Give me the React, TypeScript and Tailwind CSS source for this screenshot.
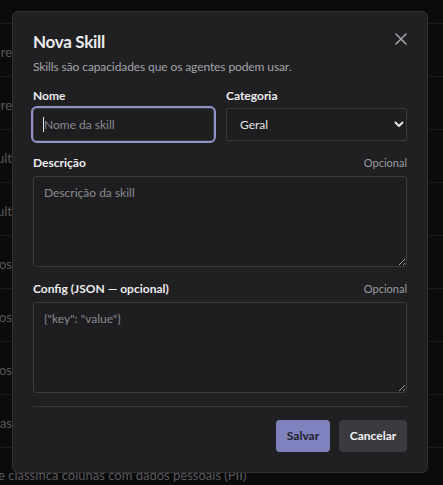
import React from "react";

const rows = [
  "Skill que gere",
  "Skill que gere",
  "Resultado final do result",
  "Resultado final do result",
  "Análise de dados",
  "Análise de dados",
  "Análise de dados",
  "Colunas e tabelas",
];

export default function App() {
  return (
    <div
      className="relative w-[443px] h-[485px] overflow-hidden bg-[#0b0b0c] [color-scheme:dark]"
      style={{ fontFamily: 'Lato, "Open Sans", sans-serif' }}
    >
      {/* background page */}
      <div className="flex flex-col">
        <div className="h-[24px] border-b border-[#1b1b1d]" />
        {rows.map((r, i) => (
          <div key={i} className="h-[53px] border-b border-[#1b1b1d] pt-[19px]">
            <div className="flex w-[12px] justify-end overflow-hidden">
              <span className="shrink-0 whitespace-nowrap text-[13px] leading-[18px] text-[#58585c]">{r}</span>
            </div>
          </div>
        ))}
        <div className="h-[53px] pt-[18px] -ml-[2px]">
          <span className="block whitespace-nowrap text-[13px] leading-[18px] text-[#5a5a5e]">
            e classifica colunas com dados pessoais (PII)
          </span>
        </div>
      </div>

      {/* dialog */}
      <div className="absolute left-[12px] top-[11px] w-[416px] rounded-[6px] border border-[#313134] bg-[#202022] px-5 pt-[18px] pb-5 text-[#ececee]">
        <button className="absolute right-[20px] top-[21px] text-[#a8a8ad]">
          <svg width="12" height="12" viewBox="0 0 12 12" fill="none" stroke="currentColor" strokeWidth="1.5" strokeLinecap="round">
            <path d="M1 1L11 11M11 1L1 11" />
          </svg>
        </button>
        <h2 className="h-[24px] text-[17px] leading-[24px] font-bold tracking-[-0.3px]">Nova Skill</h2>
        <p className="mt-[5px] h-[16px] text-[12px] leading-[16px] tracking-[-0.1px] text-[#a3a3a8]">Skills são capacidades que os agentes podem usar.</p>

        <div className="mt-[13px] grid grid-cols-2 gap-3">
          <div className="flex flex-col">
            <label className="h-[16px] text-[12px] leading-[16px] font-bold">Nome</label>
            <div className="relative mt-[4px]">
              <input
                placeholder="Nome da skill"
                className="block w-full h-[33px] rounded-[4px] border border-[#3b3b3f] bg-[#1e1e20] px-[10px] text-[12px] text-[#e6e6e6] placeholder:text-[#8a8a8f] outline-2 outline-solid outline-[#8f93c9]"
              />
              <span className="absolute left-[10px] top-[9px] h-[15px] w-[1px] bg-[#e6e6e6]" />
            </div>
          </div>
          <div className="flex flex-col">
            <label className="h-[16px] text-[12px] leading-[16px] font-bold">Categoria</label>
            <div className="relative mt-[4px]">
              <select className="block w-full h-[33px] appearance-none rounded-[3px] border border-[#3b3b3f] bg-[#1e1e20] pl-[13px] text-[12px] text-[#e6e6e6] outline-none">
                <option>Geral</option>
              </select>
              <svg className="pointer-events-none absolute right-[3px] top-[13px]" width="10" height="7" viewBox="0 0 10 7" fill="none" stroke="#e6e6e6" strokeWidth="2" strokeLinecap="round" strokeLinejoin="round">
                <path d="M1.5 1.5L5 5L8.5 1.5" />
              </svg>
            </div>
          </div>
        </div>

        <div className="mt-[14px] flex h-[16px] items-center justify-between">
          <label className="text-[12px] leading-[16px] font-bold">Descrição</label>
          <span className="text-[11px] leading-[16px] text-[#9a9a9f]">Opcional</span>
        </div>
        <textarea
          placeholder="Descrição da skill"
          className="mt-[5px] block w-full h-[91px] rounded-[3px] border border-[#3b3b3f] bg-[#1e1e20] px-[10px] py-[8px] text-[12px] leading-[16px] text-[#e6e6e6] placeholder:text-[#8a8a8f] outline-none"
        />

        <div className="mt-[14px] flex h-[16px] items-center justify-between">
          <label className="text-[12px] leading-[16px] font-bold">Config (JSON — opcional)</label>
          <span className="text-[11px] leading-[16px] text-[#9a9a9f]">Opcional</span>
        </div>
        <textarea
          placeholder={'{"key": "value"}'}
          className="mt-[5px] block w-full h-[91px] rounded-[3px] border border-[#3b3b3f] bg-[#1e1e20] px-[10px] py-[8px] text-[12px] leading-[16px] text-[#e6e6e6] placeholder:text-[#8a8a8f] outline-none"
        />

        <div className="mt-[13px] border-t border-[#38383c]" />

        <div className="mt-[13px] flex justify-end gap-[9px]">
          <button className="h-[32px] w-[54px] rounded-[4px] bg-[#7e82bd] text-[12px] font-bold text-[#1e1e2a]">Salvar</button>
          <button className="h-[32px] w-[68px] rounded-[4px] bg-[#3b3b3f] text-[12px] font-bold text-[#f2f2f4]">Cancelar</button>
        </div>
      </div>
    </div>
  );
}
